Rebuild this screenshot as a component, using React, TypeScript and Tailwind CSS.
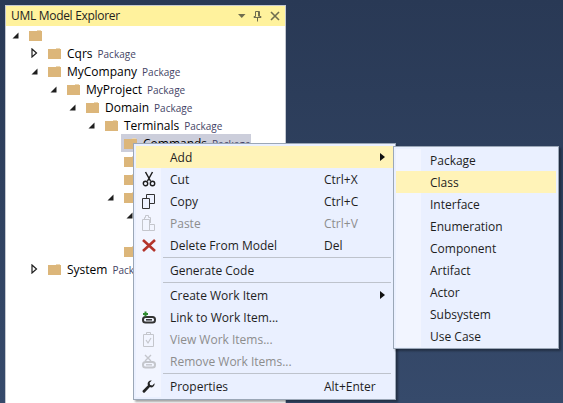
const FONT = "font-['Open_Sans','Noto_Sans',sans-serif]";

type TreeRow = { depth: number; arrow?: 'open' | 'closed'; name?: string; selected?: boolean; folder?: boolean };

const TREE: TreeRow[] = [
  { depth: 0, arrow: 'open', folder: true },
  { depth: 1, arrow: 'closed', name: 'Cqrs', folder: true },
  { depth: 1, arrow: 'open', name: 'MyCompany', folder: true },
  { depth: 2, arrow: 'open', name: 'MyProject', folder: true },
  { depth: 3, arrow: 'open', name: 'Domain', folder: true },
  { depth: 4, arrow: 'open', name: 'Terminals', folder: true },
  { depth: 5, name: 'Commands', selected: true, folder: true },
  { depth: 5, folder: true },
  { depth: 5, folder: true },
  { depth: 5, arrow: 'open', folder: true },
  { depth: 6, arrow: 'open', folder: true },
  { depth: 7 },
  { depth: 5, folder: true },
  { depth: 1, arrow: 'closed', name: 'System', folder: true },
];

function Folder() {
  return (
    <svg width="13" height="12" viewBox="0 0 13 12" className="shrink-0">
      <path d="M0 2h8V1h4v1h1v10H0z" fill="#dcb67a" />
      <path d="M8 1h4v1H8z" fill="#ecd7b2" />
    </svg>
  );
}

function Arrow({ kind }: { kind?: 'open' | 'closed' }) {
  return (
    <span className="w-[17px] h-[12px] shrink-0 flex items-center">
      {kind === 'open' && (
        <svg width="7" height="7" viewBox="0 0 7 7">
          <path d="M6.5 0.5v6h-6z" fill="#1e1e1e" />
        </svg>
      )}
      {kind === 'closed' && (
        <svg width="7" height="10" viewBox="0 0 7 10">
          <path d="M1 1l4.5 4-4.5 4z" fill="#ffffff" stroke="#1e1e1e" strokeWidth="1.2" />
        </svg>
      )}
    </span>
  );
}

function ScissorsIcon() {
  return (
    <svg width="14" height="16" viewBox="0 0 14 16" fill="none" stroke="#1e1e1e">
      <path d="M3.5 1l5 9M10.5 1l-5 9" strokeWidth="1.5" />
      <circle cx="3.5" cy="12.5" r="2.2" strokeWidth="1.4" />
      <circle cx="10.5" cy="12.5" r="2.2" strokeWidth="1.4" />
    </svg>
  );
}

function CopyIcon() {
  return (
    <svg width="13" height="15" viewBox="0 0 13 15" fill="#eef2ff" stroke="#333333">
      <path d="M4.5 .5h8v9h-8z" />
      <path d="M.5 4.5h7v10h-7z" />
    </svg>
  );
}

function PasteIcon() {
  return (
    <svg width="13" height="16" viewBox="0 0 13 16" fill="none" stroke="#c4c6cc">
      <path d="M.5 4.5h7v11h-7z" />
      <path d="M7.5 9.5h5v6h-5zM2.5 4V2.5h1V.5h3v2h2V8" />
    </svg>
  );
}

function DeleteIcon() {
  return (
    <svg width="14" height="13" viewBox="0 0 14 13" stroke="#b3342b" strokeWidth="2.6" fill="none">
      <path d="M1 1l12 11M13 1L1 12" />
    </svg>
  );
}

function LinkAddIcon() {
  return (
    <svg width="14" height="13" viewBox="0 0 14 13" fill="none">
      <rect x="1" y="6" width="12" height="5.5" rx="2.5" stroke="#333333" strokeWidth="2" />
      <path d="M4 8.8h6" stroke="#333333" strokeWidth="1.5" />
      <path d="M1 3h5M3.5 .5v5" stroke="#2f8a2f" strokeWidth="2" />
    </svg>
  );
}

function ViewItemsIcon() {
  return (
    <svg width="11" height="15" viewBox="0 0 11 15" fill="none" stroke="#c4c6cc">
      <path d="M.5 2.5h10v12H.5zM3.5 2.5v-2h4v2" />
      <path d="M3 8l2 3 3-5" strokeWidth="1.2" />
    </svg>
  );
}

function RemoveLinkIcon() {
  return (
    <svg width="14" height="15" viewBox="0 0 14 15" fill="none" stroke="#c4c6cc">
      <path d="M3 1l6 6M9 1L3 7" strokeWidth="1.4" />
      <rect x="1" y="8" width="12" height="5.5" rx="2.5" strokeWidth="2" />
      <path d="M4 10.8h6" strokeWidth="1.4" />
    </svg>
  );
}

function WrenchIcon() {
  return (
    <svg width="13" height="13" viewBox="0 0 13 13">
      <path d="M12.5 3.2a3.4 3.4 0 0 1-4.6 3.9L3 12.2a1.3 1.3 0 0 1-2-2l5-4.9A3.4 3.4 0 0 1 9.8.5L7.6 2.7l.5 2.2 2.2.5z" fill="#222222" />
    </svg>
  );
}

type MenuItem =
  | { sep: true }
  | { sep?: false; label: string; shortcut?: string; icon?: React.ReactNode; disabled?: boolean; submenu?: boolean; active?: boolean };

const MENU: MenuItem[] = [
  { label: 'Add', submenu: true, active: true },
  { label: 'Cut', shortcut: 'Ctrl+X', icon: <ScissorsIcon /> },
  { label: 'Copy', shortcut: 'Ctrl+C', icon: <CopyIcon /> },
  { label: 'Paste', shortcut: 'Ctrl+V', icon: <PasteIcon />, disabled: true },
  { label: 'Delete From Model', shortcut: 'Del', icon: <DeleteIcon /> },
  { sep: true },
  { label: 'Generate Code' },
  { sep: true },
  { label: 'Create Work Item', submenu: true },
  { label: 'Link to Work Item...', icon: <LinkAddIcon /> },
  { label: 'View Work Items...', icon: <ViewItemsIcon />, disabled: true },
  { label: 'Remove Work Items...', icon: <RemoveLinkIcon />, disabled: true },
  { sep: true },
  { label: 'Properties', shortcut: 'Alt+Enter', icon: <WrenchIcon /> },
];

const SUBMENU = ['Package', 'Class', 'Interface', 'Enumeration', 'Component', 'Artifact', 'Actor', 'Subsystem', 'Use Case'];

function ContextMenu() {
  return (
    <div className="absolute left-[133px] top-[143px] w-[263px] h-[257px] p-[2px] border border-[#9ba7b7] bg-[#eaf0ff] shadow-[2px_2px_2px_rgba(0,0,0,0.35)]">
      {MENU.map((item, i) =>
        item.sep ? (
          <div key={i} className="h-[3px] flex">
            <div className="w-[25px] bg-[#f2f5ff]" />
            <div className="flex-1 flex items-center pl-[2px] pr-[2px]">
              <div className="h-px w-full bg-[#bec3cc]" />
            </div>
          </div>
        ) : (
          <div key={i} className={`relative h-[22px] flex items-center ${item.active ? 'bg-[#fff3b8]' : ''}`}>
            <span className={`w-[25px] h-full shrink-0 flex items-center justify-center ${item.active ? '' : 'bg-[#f2f5ff]'}`}>
              {item.icon}
            </span>
            <span className={`pl-[9px] pt-px w-[163px] shrink-0 whitespace-nowrap ${item.disabled ? 'text-[#8d8d8d]' : 'text-[#1e1e1e]'}`}>
              {item.label}
            </span>
            {item.shortcut && (
              <span className={`pt-px ${item.disabled ? 'text-[#8d8d8d]' : 'text-[#1e1e1e]'}`}>{item.shortcut}</span>
            )}
            {item.submenu && (
              <svg width="5" height="8" viewBox="0 0 5 8" className="absolute right-[8px] top-[7px]">
                <path d="M0 0l5 4-5 4z" fill="#111111" />
              </svg>
            )}
          </div>
        ),
      )}
    </div>
  );
}

function AddSubmenu() {
  return (
    <div className="absolute left-[393px] top-[146px] w-[166px] h-[203px] p-[2px] border border-[#9ba7b7] bg-[#eaf0ff] shadow-[2px_2px_2px_rgba(0,0,0,0.35)]">
      {SUBMENU.map((label) => (
        <div key={label} className={`h-[22px] flex items-center ${label === 'Class' ? 'bg-[#fff3b8]' : ''}`}>
          <span className={`w-[25px] h-full shrink-0 ${label === 'Class' ? '' : 'bg-[#f2f5ff]'}`} />
          <span className="pl-[9px] pt-px text-[#1e1e1e]">{label}</span>
        </div>
      ))}
    </div>
  );
}

export default function App() {
  return (
    <div className={`relative w-[563px] h-[403px] overflow-hidden pl-[5px] pt-[5px] bg-gradient-to-b from-[#293955] to-[#364a6b] text-[12px] leading-[16px] ${FONT}`}>
      <div className="w-[281px] h-[398px] border border-[#c4c8d0] border-b-0 bg-white flex flex-col">
        <div className="h-[20px] shrink-0 flex items-center bg-[#fff29d] pl-[5px] pr-[5px] text-[#1e1e1e] text-[12px] tracking-[-0.3px]">
          <span className="flex-1">UML Model Explorer</span>
          <svg width="42" height="12" viewBox="0 0 42 12" fill="none" stroke="#6f6d4f">
            <path d="M0 4h7.5L3.75 8z" fill="#6f6d4f" stroke="none" />
            <path d="M17.5 1.5h4v5h1.5v1h-7v-1h1.5zM19.5 8v3.5M20.5 2v4.5" />
            <path d="M33 2l8 8M41 2l-8 8" strokeWidth="1.6" />
          </svg>
        </div>
        <div className="flex flex-col">
          {TREE.map((row, i) => (
            <div key={i} className="h-[18px] flex items-center" style={{ paddingLeft: 6 + row.depth * 19 }}>
              <Arrow kind={row.arrow} />
              <div className={`relative flex items-center h-[18px] ${row.selected ? 'bg-[#cccedb] w-[130px] -ml-[3px] pl-[3px]' : ''}`}>
                {row.folder && <Folder />}
                {row.name && (
                  <span className="ml-[6px] pt-px text-[#000000] whitespace-nowrap">{row.name}</span>
                )}
                {row.name && <span className="ml-[5px] pt-px text-[10px] text-[#444466] whitespace-nowrap">Package</span>}
              </div>
            </div>
          ))}
        </div>
      </div>
      <ContextMenu />
      <AddSubmenu />
    </div>
  );
}
